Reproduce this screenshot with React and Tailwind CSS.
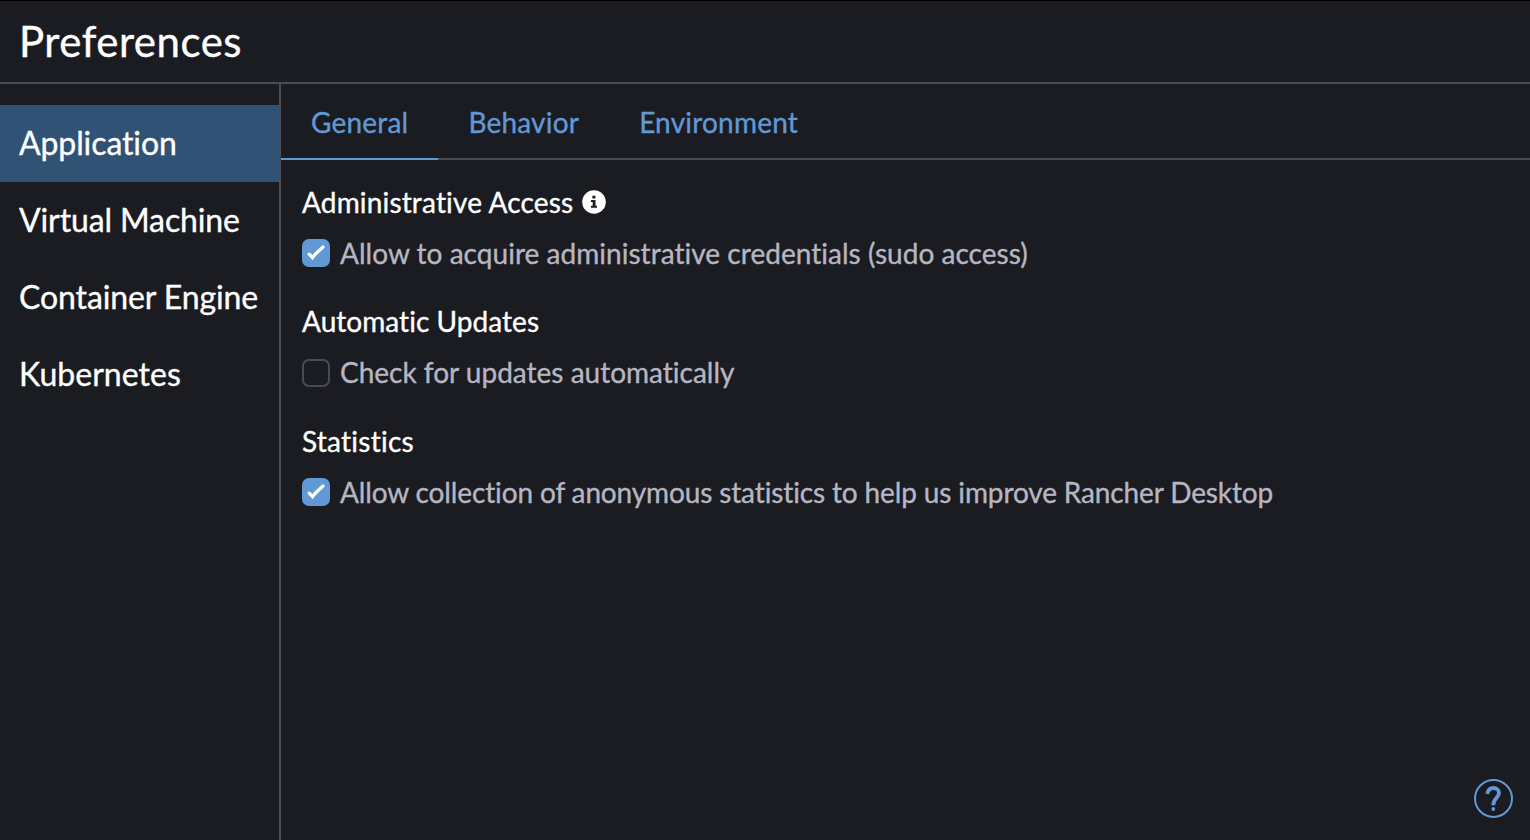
const nav = [
  { label: "Application", tracking: "tracking-[-0.1px]" },
  { label: "Virtual Machine", tracking: "tracking-[-0.12px]" },
  { label: "Container Engine", tracking: "tracking-[-0.1px]" },
  { label: "Kubernetes", tracking: "tracking-[0.03px]" },
];
const tabs = ["General", "Behavior", "Environment"];

function Checkbox({ checked, label, tracking = "" }) {
  return (
    <div className="flex h-[28px] items-center">
      <span className={checked ? "flex size-7 items-center justify-center rounded-[7px] bg-[#6199d5]" : "mt-[2px] size-7 rounded-[7px] border-2 border-[#4a4b52]"}>
        {checked && (
          <svg className="size-7" viewBox="0 0 28 28" fill="none" stroke="#fff" strokeWidth="3.300" strokeLinecap="round">
            <path d="M7.200 15.200 10.500 18.600C12.500 15.500 16.500 12 21 8" />
          </svg>
        )}
      </span>
      <span className={`ml-[10px] whitespace-nowrap text-[28px] leading-[28px] text-[#b6b6c2] ${tracking}`}>{label}</span>
    </div>
  );
}

export default function App() {
  return (
    <div className="flex h-[840px] w-[1530px] flex-col overflow-hidden border-t border-black bg-[#1b1c21] font-['Lato',sans-serif] text-white [font-variant-ligatures:none] [-webkit-text-stroke:0.35px_currentColor]">
      <header className="flex h-[83px] shrink-0 items-center border-b-2 border-[#4a4b52] pb-[2px] pl-[19px]">
        <h1 className="text-[42px] leading-[50px] tracking-[0.5px]">Preferences</h1>
      </header>
      <div className="flex min-h-0 flex-1">
        <nav className="w-[281px] shrink-0 border-r-2 border-[#4a4b52] pt-[21px]">
          {nav.map(({ label, tracking }, i) => (
            <div key={label} className={`flex h-[77px] items-center whitespace-nowrap pb-[2px] pl-[19px] text-[32px] ${tracking} ${i === 0 ? "bg-[#305375]" : ""}`}>{label}</div>
          ))}
        </nav>
        <main className="relative flex-1">
          <div className="flex h-[76px] border-b-2 border-[#4a4b52]">
            {tabs.map((t, i) => (
              <div key={t} className={`flex h-[76px] items-center border-b-2 px-[30px] pt-[2px] text-[28px] tracking-[0.2px] text-[#6199d5] ${i === 0 ? "border-[#6199d5]" : "border-transparent"}`}>{t}</div>
            ))}
          </div>
          <div className="pl-[21px] pt-[25px]">
            <section className="h-[119px]">
              <h2 className="mb-[20px] flex h-[34px] items-center text-[28px] tracking-[0.16px]">Administrative Access
                <svg className="ml-[9px] size-6" viewBox="0 0 24 24"><circle cx="12" cy="12" r="11.800" fill="#fff" /><path d="M10.400 5.700h3v2.800h-3zM9 10h4.500v5.800H15v2H9v-2h1.700v-3.800H9z" fill="#1b1c21" /></svg>
              </h2>
              <Checkbox checked tracking="tracking-[0.03px]" label="Allow to acquire administrative credentials (sudo access)" />
            </section>
            <section className="h-[120px]">
              <h2 className="mb-[20px] flex h-[34px] items-center text-[28px] tracking-[0.05px]">Automatic Updates</h2>
              <Checkbox label="Check for updates automatically" />
            </section>
            <section>
              <h2 className="mb-[20px] flex h-[34px] items-center text-[28px] tracking-[0.25px]">Statistics</h2>
              <Checkbox checked tracking="tracking-[-0.13px]" label="Allow collection of anonymous statistics to help us improve Rancher Desktop" />
            </section>
          </div>
          <svg className="absolute bottom-[22px] right-[17px] size-10" viewBox="0 0 40 40" fill="none" stroke="#6199d5">
            <circle cx="20.500" cy="20.500" r="18.500" strokeWidth="2" />
            <path d="M14.200 15.800C15 12 17.300 10 20.500 10C23.700 10 26 12 26 15C26 19.800 20.300 20 20.300 27.300" strokeWidth="3.800" />
            <circle cx="20.300" cy="31" r="1.900" fill="#6199d5" stroke="none" />
          </svg>
        </main>
      </div>
    </div>
  );
}
